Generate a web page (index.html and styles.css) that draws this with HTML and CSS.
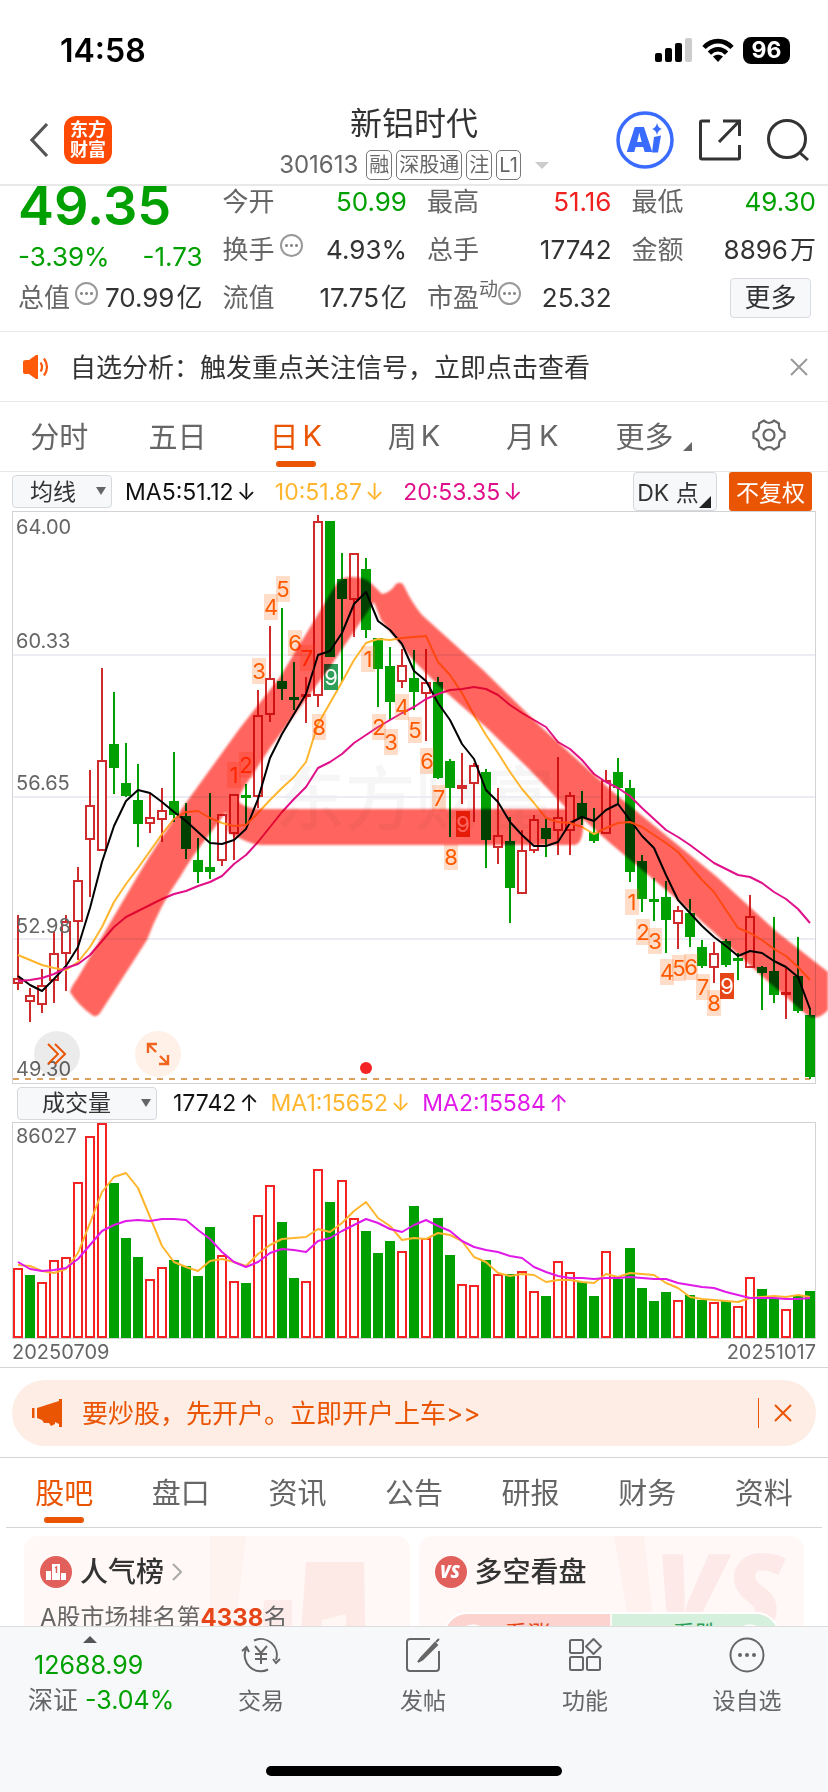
FILE: index.html
```html
<!DOCTYPE html>
<html lang="zh-CN">
  <head>
    <meta charset="UTF-8" />
    <meta name="viewport" content="width=device-width, initial-scale=1.0" />
    <title>新铝时代 301613</title>

    <link rel="stylesheet" href="styles.css">
  </head>
  <body>
    <div class="status-bar">
      <span class="status-time">14:58</span>
      <div class="status-icons">
        <svg width="38" height="24" viewBox="0 0 38 24">
          <rect x="0" y="15" width="7" height="9" rx="2" />
          <rect x="10" y="10" width="7" height="14" rx="2" />
          <rect x="20" y="5" width="7" height="19" rx="2" />
          <rect x="30" y="0" width="7" height="24" rx="2" fill="#ccc" />
        </svg>
        <svg width="32" height="24" viewBox="0 0 32 24">
          <g fill="none" stroke="#000" stroke-width="4.6">
            <path d="M2 9.5C10 1 22 1 30 9.5" />
            <path d="M7.4 15.2C12.5 10 19.5 10 24.6 15.2" />
          </g>
          <path d="M16 24L11 18.5C14 16 18 16 21 18.5Z" />
        </svg>
        <span class="battery">96</span>
      </div>
    </div>

    <header class="header">
      <div class="header-left">
        <button class="icon-btn" aria-label="返回">
          <svg width="20" height="36" viewBox="0 0 20 36"><path d="M18 2L3 18L18 34" fill="none" stroke="#555" stroke-width="3.2" /></svg>
        </button>
        <a class="logo" href="#">东方<br>财富</a>
      </div>
      <div class="header-title">
        <h1>新铝时代</h1>
        <div class="header-sub">
          <span class="code">301613</span>
          <span class="tag">融</span><span class="tag">深股通</span><span class="tag">注</span><span class="tag">L1</span>
          <i class="caret"></i>
        </div>
      </div>
      <div class="header-right">
        <button class="icon-btn" aria-label="AI">
          <svg width="58" height="58" viewBox="0 0 58 58">
            <circle cx="29" cy="29" r="27" fill="#fff" stroke="#3a6bff" stroke-width="3.5" />
            <text class="ai-text" x="10" y="41">A</text>
            <path d="M38 26l7-1.5-3 17h-6z" fill="#3a6bff" />
            <path d="M41 12Q42 17 46 18Q42 19 41 24Q40 19 36 18Q40 17 41 12Z" fill="#3a6bff" />
          </svg>
        </button>
        <button class="icon-btn" aria-label="分享">
          <svg width="44" height="44" viewBox="0 0 44 44" fill="none" stroke="#333" stroke-width="3"><path d="M12 3H4Q2.500 3 2.500 4.500V39.500Q2.500 41 4 41H40Q41.500 41 41.500 39.500V27M25 3H41.500V18M41 3.500L21 24" /></svg>
        </button>
        <button class="icon-btn" aria-label="搜索">
          <svg width="44" height="44" viewBox="0 0 44 44" fill="none" stroke="#333" stroke-width="3"><circle cx="21" cy="21" r="18.5" /><path d="M33 34L42 42" /></svg>
        </button>
      </div>
    </header>

    <main class="main">
      <section class="quote">
        <div class="quote-col">
          <div class="price down">49.35</div>
          <div class="quote-row change down"><span>-3.39%</span><span>-1.73</span></div>
          <div class="quote-row"><span class="label">总值<i class="more-dot"></i></span><span>70.99<em>亿</em></span></div>
        </div>
        <div class="quote-col">
          <div class="quote-row first"><span class="label">今开</span><span class="down">50.99</span></div>
          <div class="quote-row"><span class="label">换手<i class="more-dot"></i></span><span>4.93%</span></div>
          <div class="quote-row"><span class="label">流值</span><span>17.75<em>亿</em></span></div>
        </div>
        <div class="quote-col">
          <div class="quote-row first"><span class="label">最高</span><span class="up">51.16</span></div>
          <div class="quote-row"><span class="label">总手</span><span>17742</span></div>
          <div class="quote-row"><span class="label">市盈<sup>动</sup><i class="more-dot tight"></i></span><span>25.32</span></div>
        </div>
        <div class="quote-col">
          <div class="quote-row first"><span class="label">最低</span><span class="down">49.30</span></div>
          <div class="quote-row"><span class="label">金额</span><span>8896<em>万</em></span></div>
          <div class="quote-row last"><button class="more-btn">更多</button></div>
        </div>
      </section>

      <section class="notice">
        <svg width="28" height="24" viewBox="0 0 28 24">
          <path d="M1 7Q1 5 4 5H7L14 0H16V24H14L7 19H4Q1 19 1 17Z" fill="#ff5a0a" />
          <path d="M18.5 7.5Q21.500 12 18.500 16.500M22 3.500Q28 12 22 20.500" fill="none" stroke="#ff5a0a" stroke-width="2.2" />
        </svg>
        <p>自选分析：触发重点关注信号，立即点击查看</p>
        <button class="icon-btn" aria-label="关闭">
          <svg width="18" height="18" viewBox="0 0 18 18"><path d="M1 1L17 17M17 1L1 17" stroke="#999" stroke-width="2" /></svg>
        </button>
      </section>

      <nav class="tabs period-tabs">
        <a href="#">分时</a>
        <a href="#">五日</a>
        <a href="#" class="active">日<span>K</span></a>
        <a href="#">周<span>K</span></a>
        <a href="#">月<span>K</span></a>
        <a href="#" class="more-tab">更多<i class="corner"></i></a>
        <a href="#" aria-label="设置">
          <svg width="34" height="34" viewBox="0 0 34 34" fill="none" stroke="#666" stroke-width="2.2" stroke-linejoin="round">
            <path d="M12 2.500Q14 5 17 5Q20 5 22 2.500L27 5.500Q26.500 9 28 11.500Q29.500 13.500 32.500 14V20Q29.500 20.500 28 22.500Q26.500 25 27 28.500L22 31.500Q20 29 17 29Q14 29 12 31.500L7 28.500Q7.500 25 6 22.500Q4.500 20.500 1.500 20V14Q4.500 13.500 6 11.500Q7.500 9 7 5.500Z" />
            <circle cx="17" cy="17" r="5.5" />
          </svg>
        </a>
      </nav>

      <section class="charts">
        <div class="toolbar">
          <span class="select-box">
            <select aria-label="主图指标"><option>均线</option></select>
          </span>
          <span class="ma ma-dark">MA5:51.12<i>↓</i></span>
          <span class="ma ma-yellow">10:51.87<i>↓</i></span>
          <span class="ma ma-pink">20:53.35<i>↓</i></span>
          <button class="dk-btn">DK 点</button>
          <button class="fq-btn">不复权</button>
        </div>

        <div class="chart-wrap">
          <svg class="chart" id="kline" viewBox="12 511 804 573"></svg>
          <button class="round-btn expand" aria-label="展开">
            <svg width="20" height="22" viewBox="0 0 20 22" fill="none" stroke="#ea5504" stroke-width="2"><path d="M1 1L11 11L1 21M8 1L18 11L8 21" /></svg>
          </button>
          <button class="round-btn full" aria-label="全屏">
            <svg width="24" height="24" viewBox="0 0 24 24" fill="none" stroke="#f0641e" stroke-width="2.4"><path d="M2 11V2H11M2 2L10 10M22 13V22H13M22 22L14 14" /></svg>
          </button>
        </div>

        <div class="toolbar vol-bar">
          <span class="select-box wide">
            <select aria-label="副图指标"><option>成交量</option></select>
          </span>
          <span class="ma ma-dark">17742<i>↑</i></span>
          <span class="ma ma-yellow">MA1:15652<i>↓</i></span>
          <span class="ma ma-purple">MA2:15584<i>↑</i></span>
        </div>

        <div class="chart-wrap">
          <svg class="chart" id="volume" viewBox="12 1122 804 217"></svg>
        </div>
        <div class="dates"><span>20250709</span><span>20251017</span></div>
      </section>

      <section class="banner-wrap">
        <div class="banner">
          <svg width="32" height="28" viewBox="0 0 32 28" fill="#ea5504"><path d="M0 9H2.500V19H0ZM5 9L27 2V0H30V28H27V25L23 23V25L19 27L17 24L12 24L10 21L5 19Z" /></svg>
          <a href="#">要炒股，先开户。立即开户上车&gt;&gt;</a>
          <button class="icon-btn" aria-label="关闭广告">
            <svg width="18" height="18" viewBox="0 0 18 18"><path d="M1 1L17 17M17 1L1 17" stroke="#ea5504" stroke-width="2" /></svg>
          </button>
        </div>
      </section>

      <nav class="tabs info-tabs">
        <a href="#" class="active">股吧</a>
        <a href="#">盘口</a>
        <a href="#">资讯</a>
        <a href="#">公告</a>
        <a href="#">研报</a>
        <a href="#">财务</a>
        <a href="#">资料</a>
      </nav>

      <section class="cards">
        <article class="card">
          <svg class="card-bg" width="200" height="140" viewBox="0 0 200 140">
            <path d="M0 0H36L20 140H0Z" fill="#fff3f0" />
            <path d="M54 64H82V140H50Z" fill="#fdecea" />
            <path d="M96 26H154L156 140H88Z" fill="#fdeae7" />
            <path d="M112 84L136 78V140H120V96L110 98Z" fill="#fff7f4" />
          </svg>
          <h2>
            <svg width="32" height="32" viewBox="0 0 32 32"><circle cx="16" cy="16" r="16" fill="#e2605c" /><path d="M6 15H11V24H6ZM12 8H20V24H12ZM21 17H26V24H21Z" fill="#fff" /><path d="M15 12L16.500 11V17" fill="none" stroke="#e2605c" stroke-width="1.5" /></svg>
            人气榜
            <svg width="10" height="18" viewBox="0 0 10 18"><path d="M1 1L9 9L1 17" fill="none" stroke="#aaa" stroke-width="2" /></svg>
          </h2>
          <p>A股市场排名第<b>4338</b>名</p>
        </article>
        <article class="card">
          <svg class="card-bg" width="190" height="140" viewBox="0 0 190 140">
            <path d="M0 0H30L46 140H24Z" fill="#fef1ee" />
            <text class="vs-bg" x="40" y="98">VS</text>
          </svg>
          <h2>
            <svg width="32" height="32" viewBox="0 0 32 32"><circle cx="16" cy="16" r="16" fill="#e2605c" /><text class="vs-icon" x="15" y="22">VS</text></svg>
            多空看盘
          </h2>
          <div class="vote">
            <button class="vote-up">看涨</button>
            <button class="vote-down">看跌</button>
          </div>
        </article>
      </section>
    </main>

    <footer class="bottom-bar">
      <nav class="bottom-nav">
        <a class="index" href="#">
          <i class="caret-up"></i>
          <span class="index-value down">12688.99</span>
          <span>深证 <b class="down">-3.04%</b></span>
        </a>
        <a href="#">
          <svg width="40" height="36" viewBox="0 0 40 36" fill="none" stroke="#666" stroke-width="2">
            <path d="M13 3.500A16 16 0 0 1 35 23M27 32.500A16 16 0 0 1 5 12M1 14L5.500 10L8 15M32 22L35 26L39 22" />
            <path d="M14 9L20 16L26 9M20 16V27M14 17H26M14 22H26" />
          </svg>
          交易
        </a>
        <a href="#">
          <svg width="36" height="36" viewBox="0 0 36 36" fill="none" stroke="#666" stroke-width="2"><path d="M25 2H5Q2 2 2 5V31Q2 34 5 34H31Q34 34 34 31V14" /><path d="M30 6L16 21L13 25L17.500 22.500L32 8ZM31 5L34 2" fill="#666" /></svg>
          发帖
        </a>
        <a href="#">
          <svg width="34" height="36" viewBox="0 0 34 36" fill="none" stroke="#666" stroke-width="2"><rect x="2" y="3" width="13" height="13" rx="1.5" /><rect x="2" y="20" width="13" height="13" rx="1.5" /><rect x="19" y="20" width="13" height="13" rx="1.5" /><path d="M25.500 2L33 9.500L25.500 17L18 9.500Z" stroke-linejoin="round" /></svg>
          功能
        </a>
        <a href="#">
          <svg width="36" height="36" viewBox="0 0 36 36"><circle cx="18" cy="18" r="16.5" fill="none" stroke="#666" stroke-width="2" /><g fill="#666"><circle cx="11" cy="18" r="2" /><circle cx="18" cy="18" r="2" /><circle cx="25" cy="18" r="2" /></g></svg>
          设自选
        </a>
      </nav>
      <div class="home-indicator"></div>
    </footer>

    <script src="script.js"></script>
  </body>
</html>
```

FILE: styles.css
```css
html {
  box-sizing: border-box;
  font-family: Inter, "Noto Sans CJK SC", sans-serif;
  font-size: 24px;
}

*,
*:before,
*:after {
  box-sizing: inherit;
}

body {
  --orange: #ea5504;
  --green: #00a000;
  --red: #f02020;
  --grey: #666;
  --line: #e8e8e8;
  display: flex;
  flex-direction: column;
  height: 100vh;
  margin: 0;
  overflow: hidden;
  color: #333;
  background-color: #fff;
}

h1,
h2,
p {
  margin: 0;
  font-weight: normal;
}

a {
  color: inherit;
  text-decoration: none;
}

button,
select {
  padding: 0;
  border: none;
  color: inherit;
  font: inherit;
  background: none;
}

i,
em {
  font-style: normal;
}

svg {
  display: block;
  flex: none;
}

.up {
  color: var(--red);
}

.down {
  color: var(--green);
}

.icon-btn {
  display: flex;
}

/* ********** Status bar ********** */
.status-bar {
  display: flex;
  flex: none;
  justify-content: space-between;
  align-items: center;
  height: 100px;
  padding: 0 38px 0 60px;
}

.status-time {
  color: #000;
  font-size: 32px;
  font-weight: 600;
}

.status-icons {
  display: flex;
  align-items: center;
  gap: 9px;
}

.battery {
  width: 47px;
  border-radius: 8px;
  color: #fff;
  font-size: 23px;
  font-weight: 700;
  line-height: 27px;
  text-align: center;
  background-color: #000;
}

/* ********** Header ********** */
.header {
  display: grid;
  flex: none;
  grid-template-columns: 1fr auto 1fr;
  height: 86px;
  padding: 0 18px;
  border-bottom: 2px solid var(--line);
}

.header-left,
.header-right {
  display: flex;
  align-items: center;
  height: 80px;
}

.header-left {
  gap: 15px;
  padding-left: 11px;
}

.header-right {
  justify-content: flex-end;
  gap: 24px;
}

.logo {
  padding: 4px 6px;
  border-radius: 12px;
  color: #fff;
  font-size: 18px;
  font-weight: 700;
  line-height: 20px;
  background-color: #ff4a05;
}

.ai-text {
  fill: #3a6bff;
  font-size: 34px;
  font-weight: 900;
}

.header-title {
  text-align: center;
}

.header-title h1 {
  font-size: 32px;
  line-height: 48px;
}

.header-sub {
  display: flex;
  gap: 4px;
  align-items: center;
  padding-top: 2px;
  color: var(--grey);
}

.code {
  margin-right: 4px;
  font-size: 24px;
  line-height: 30px;
}

.tag {
  padding: 0 2px;
  border: 1px solid #777;
  border-radius: 5px;
  font-size: 20px;
  line-height: 28px;
}

.caret {
  margin-left: 10px;
  border: 7px solid transparent;
  border-top-color: #ccc;
  border-bottom: none;
}

/* ********** Quote ********** */
.main {
  flex: 1;
  min-height: 0;
  overflow-y: auto;
  scrollbar-width: none;
}

.quote {
  display: grid;
  grid-template-columns: repeat(4, 1fr);
  gap: 20px;
  padding: 0 12px 9px 18px;
  border-bottom: 1px solid var(--line);
}

.quote-row {
  display: flex;
  justify-content: space-between;
  height: 48px;
  font-size: 26px;
  line-height: 48px;
  white-space: nowrap;
}

.quote-row.first {
  height: 40px;
  line-height: 32px;
}

.quote-row.change {
  padding-top: 7px;
}

.quote-row.last {
  justify-content: flex-end;
  align-items: center;
  padding-right: 5px;
}

.price {
  font-size: 54px;
  font-weight: 600;
  line-height: 40px;
}

.label {
  display: flex;
  color: var(--grey);
}

.label sup {
  font-size: 19px;
  line-height: 32px;
}

.more-dot {
  width: 23px;
  height: 23px;
  margin: 8px 0 0 5px;
  border: 2px solid #999;
  border-radius: 50%;
  background: radial-gradient(circle, #888 1px, transparent 2px) center / 5px 5px no-repeat,
    radial-gradient(circle, #888 1px, transparent 2px) 2px center / 5px 5px no-repeat,
    radial-gradient(circle, #888 1px, transparent 2px) 12px center / 5px 5px no-repeat;
}

.more-dot.tight {
  margin-left: 0;
}

.quote-row em {
  margin-left: 2px;
}

.more-btn {
  width: 81px;
  height: 40px;
  border: 1px solid #d8dce2;
  border-radius: 4px;
  line-height: 36px;
  background-color: #f6f8fa;
}

/* ********** Notice ********** */
.notice {
  display: flex;
  align-items: center;
  height: 70px;
  padding: 0 20px 0 22px;
  border-bottom: 1px solid var(--line);
}

.notice p {
  flex: 1;
  padding: 0 0 3px 20px;
  font-size: 26px;
}

/* ********** Tabs ********** */
.tabs {
  display: grid;
  grid-template-columns: repeat(7, 1fr);
  height: 70px;
  border-bottom: 1px solid var(--line);
  color: var(--grey);
  font-size: 29px;
}

.tabs a {
  position: relative;
  display: flex;
  justify-content: center;
  align-items: center;
  padding-bottom: 3px;
}

.tabs span {
  margin-left: 4px;
}

.tabs .more-tab {
  padding-left: 6px;
}

.tabs .active {
  color: var(--orange);
}

.tabs .active:after {
  content: "";
  position: absolute;
  bottom: 4px;
  width: 40px;
  height: 6px;
  border-radius: 3px;
  background-color: var(--orange);
}

.corner {
  align-self: flex-end;
  margin: 0 0 17px 9px;
  border-bottom: 9px solid #666;
  border-left: 9px solid transparent;
}

/* ********** Charts ********** */
.charts {
  border-bottom: 1px solid #d5d5d5;
}

.toolbar {
  display: flex;
  align-items: center;
  height: 39px;
  padding: 0 16px 0 12px;
}

.vol-bar {
  height: 38px;
  padding-left: 17px;
}

.select-box {
  position: relative;
  width: 100px;
}

.select-box.wide {
  width: 140px;
}

.select-box select {
  display: block;
  width: 100%;
  height: 33px;
  padding-left: 17px;
  border: 1px solid #d5d9de;
  border-radius: 4px;
  appearance: none;
  font-size: 23px;
  background-color: #f6f8fa;
}

.select-box.wide select {
  padding-left: 24px;
}

.select-box:after {
  content: "";
  position: absolute;
  top: 12px;
  right: 6px;
  border: 5px solid transparent;
  border-top: 8px solid #666;
  border-bottom: none;
}

.ma {
  margin-left: 13px;
  font-size: 23px;
  white-space: nowrap;
}

.ma i {
  margin-left: 3px;
}

.ma + .ma {
  margin-left: 19px;
}

.vol-bar .ma {
  margin-left: 16px;
}

.vol-bar .ma + .ma {
  margin-left: 12px;
}

.ma-dark {
  color: #111;
}

.ma-yellow {
  color: #ffb62e;
}

.ma-pink {
  color: #e0108a;
}

.ma-purple {
  color: #e018e8;
}

.dk-btn {
  position: relative;
  width: 84px;
  height: 39px;
  margin-left: auto;
  padding: 0 14px 2px 0;
  border: 1px solid #d5d9de;
  border-radius: 4px;
  font-size: 23px;
  background-color: #f6f8fa;
}

.dk-btn:after {
  content: "";
  position: absolute;
  right: 5px;
  bottom: 2px;
  border-bottom: 12px solid #222;
  border-left: 12px solid transparent;
}

.fq-btn {
  width: 83px;
  height: 39px;
  margin-left: 12px;
  padding-bottom: 2px;
  border-radius: 3px;
  color: #fff;
  font-size: 23px;
  background-color: var(--orange);
}

.chart-wrap {
  position: relative;
  padding: 0 12px;
}

.chart {
  width: 100%;
  height: auto;
  overflow: visible;
}

.frame {
  fill: none;
  stroke: #d3d3d6;
}

.grid-line {
  stroke: #ececf4;
  stroke-width: 2;
}

.last-line {
  stroke: #dba05e;
  stroke-width: 2;
  stroke-dasharray: 6 6;
}

.axis-label {
  fill: #666;
  font-size: 20px;
}

.watermark {
  fill: #f6f6f6;
  font-size: 70px;
  font-weight: 500;
}

.candle-up {
  fill: #fff;
  stroke: #cf2a2c;
  stroke-width: 2;
}

.candle-down {
  fill: var(--green);
  stroke: var(--green);
  stroke-width: 2;
}

.vol-up {
  fill: #fff;
  stroke: #f52424;
  stroke-width: 2;
}

.line {
  fill: none;
  stroke-width: 2;
  stroke-linejoin: round;
}

.line-dark {
  stroke: #000;
}

.line-yellow {
  stroke: #ffb62e;
}

.line-pink {
  stroke: #e0108a;
}

.line-purple {
  stroke: #e018e8;
}

.mark-bg {
  fill: #ff7a30;
  fill-opacity: 0.26;
}

.mark-text {
  fill: #ff5a00;
  font-size: 22px;
  text-anchor: middle;
}

.mark-bg.sell {
  fill: #2f9e58;
  fill-opacity: 1;
}

.mark-bg.buy {
  fill: #e64518;
  fill-opacity: 1;
}

.sell + .mark-text,
.buy + .mark-text {
  fill: #fff;
}

/* trazos del rotulador encima de las velas */
.marker {
  fill: #ff655e;
  filter: blur(1px);
  mix-blend-mode: multiply;
}

.round-btn {
  position: absolute;
  bottom: 7px;
  display: flex;
  justify-content: center;
  align-items: center;
  width: 46px;
  height: 46px;
  border-radius: 50%;
}

.expand {
  left: 34px;
  background-color: rgba(0, 0, 0, 0.08);
}

.full {
  left: 135px;
  background-color: #fff0e8;
}

.dates {
  display: flex;
  justify-content: space-between;
  height: 28px;
  padding: 0 12px;
  color: var(--grey);
  font-size: 20px;
  line-height: 26px;
}

/* ********** Banner ********** */
.banner-wrap {
  padding: 12px 12px 11px;
  border-bottom: 1px solid #d5d5d5;
}

.banner {
  display: flex;
  align-items: center;
  height: 66px;
  padding: 0 24px 0 20px;
  border-radius: 33px;
  color: var(--orange);
  background-color: #feede5;
}

.banner a {
  flex: 1;
  padding: 0 0 3px 18px;
  font-size: 26px;
}

.banner .icon-btn {
  align-items: center;
  height: 30px;
  padding-left: 15px;
  border-left: 1px solid var(--orange);
}

.info-tabs {
  margin: 0 6px;
  border-color: #d5d5d5;
}

/* ********** Cards ********** */
.cards {
  display: grid;
  grid-template-columns: 1fr 1fr;
  gap: 9px;
  padding: 8px 24px;
}

.card {
  position: relative;
  height: 150px;
  padding: 12px 16px;
  border-radius: 14px;
  overflow: hidden;
  background-color: #fff8f6;
}

.card-bg {
  position: absolute;
  top: 0;
  right: 0;
}

.card h2 {
  position: relative;
  display: flex;
  align-items: center;
  gap: 8px;
  font-size: 28px;
  font-weight: 500;
  line-height: 48px;
}

.card p {
  position: relative;
  color: var(--grey);
  font-size: 24px;
  line-height: 44px;
}

.card b {
  color: #e64518;
}

.vs-bg {
  fill: #fdeae8;
  font-family: "Open Sans", sans-serif;
  font-size: 112px;
  font-style: italic;
  font-weight: 800;
}

.vs-icon {
  fill: #fff;
  font-family: "Open Sans", sans-serif;
  font-size: 17px;
  font-style: italic;
  font-weight: 800;
  text-anchor: middle;
}

.vote {
  position: relative;
  display: grid;
  grid-template-columns: 1fr 1fr;
  gap: 2px;
  margin: 16px 8px;
  border: 2px solid #fff;
  border-radius: 24px;
  overflow: hidden;
}

.vote button {
  height: 44px;
  padding-bottom: 8px;
  font-size: 23px;
}

.vote-up {
  color: #e64518;
  background: radial-gradient(circle at 28px 28px, #fff 17px, transparent 18px) #fdd3cf;
}

.vote-down {
  color: #2f9e58;
  background: radial-gradient(circle at 138px 28px, #fff 17px, transparent 18px) #d5f0dc;
}

/* ********** Bottom bar ********** */
.bottom-bar {
  flex: none;
  height: 166px;
  border-top: 1px solid #ddd;
  background-color: #f6f8fa;
}

.bottom-nav {
  display: grid;
  grid-template-columns: 180px repeat(4, 1fr);
  height: 139px;
  color: var(--grey);
  font-size: 23px;
}

.bottom-nav a {
  display: flex;
  flex-direction: column;
  align-items: center;
  gap: 9px;
  padding-top: 10px;
}

.bottom-nav .index {
  align-items: flex-start;
  gap: 0;
  padding: 9px 0 0 28px;
  font-size: 25px;
  line-height: 35px;
  white-space: nowrap;
}

.index-value {
  padding-left: 6px;
}

.index b {
  font-weight: normal;
}

.caret-up {
  margin-left: 55px;
  margin-bottom: 5px;
  border: 7px solid transparent;
  border-top: none;
  border-bottom: 7px solid #555;
}

.home-indicator {
  width: 296px;
  height: 10px;
  margin: 0 auto;
  border-radius: 5px;
  background-color: #000;
}
```

FILE: script.js
```js
const d = document;

const START_X = 18,
  STEP = 12;

// [tipo, maximo, techo, base, minimo]
const candles = [
  ["u", 915, 978, 984, 990], ["u", 988, 995, 1002, 1022], ["u", 969, 985, 1005, 1013],
  ["u", 932, 953, 981, 1003], ["u", 915, 921, 954, 991], ["u", 867, 880, 922, 960],
  ["u", 770, 805, 840, 897], ["u", 668, 760, 851, 851], ["d", 692, 744, 768, 794],
  ["d", 743, 783, 796, 797], ["d", 764, 800, 824, 847], ["u", 793, 817, 824, 833],
  ["u", 788, 810, 820, 842], ["d", 752, 801, 815, 822], ["d", 803, 816, 849, 859],
  ["d", 838, 860, 872, 883], ["d", 793, 867, 872, 879], ["u", 814, 814, 861, 866],
  ["u", 794, 794, 834, 860], ["d", 784, 795, 797, 824], ["u", 690, 715, 797, 808],
  ["u", 626, 678, 715, 722], ["d", 608, 681, 689, 700], ["d", 662, 697, 699, 710],
  ["u", 677, 694, 696, 723], ["u", 515, 521, 696, 707], ["d", 521, 521, 657, 657],
  ["d", 553, 579, 599, 682], ["u", 553, 553, 600, 637], ["d", 558, 569, 630, 638],
  ["d", 638, 638, 669, 707], ["d", 647, 666, 702, 720], ["u", 649, 665, 682, 688],
  ["d", 650, 678, 692, 710], ["u", 649, 682, 694, 741], ["d", 677, 682, 778, 779],
  ["d", 759, 761, 788, 837], ["u", 753, 785, 789, 804], ["u", 763, 765, 784, 822],
  ["d", 769, 772, 840, 868], ["u", 788, 835, 848, 864], ["d", 817, 841, 888, 923],
  ["u", 830, 850, 894, 894], ["u", 815, 819, 851, 853], ["d", 819, 828, 839, 857],
  ["u", 757, 817, 831, 855], ["u", 792, 795, 831, 855], ["d", 791, 803, 818, 825],
  ["d", 808, 832, 841, 843], ["u", 770, 780, 834, 834], ["d", 758, 772, 788, 805],
  ["d", 780, 788, 872, 882], ["d", 855, 861, 899, 912], ["d", 878, 899, 901, 921],
  ["d", 881, 897, 920, 953], ["u", 906, 910, 924, 949], ["d", 899, 913, 937, 947],
  ["d", 940, 947, 966, 968], ["u", 942, 953, 968, 983], ["d", 939, 941, 965, 967],
  ["d", 953, 958, 960, 980], ["u", 895, 916, 968, 968], ["d", 966, 967, 973, 1010],
  ["d", 917, 971, 995, 1003], ["u", 968, 992, 995, 1019], ["d", 937, 976, 1011, 1013],
  ["d", 1008, 1015, 1077, 1079],
];

const ma5 = [976, 985, 991, 979, 966, 947, 908, 862, 826, 801, 790, 793, 802, 812, 821, 832, 843, 844, 840, 829, 799, 758, 734, 714, 694, 655, 651, 633, 604, 592, 621, 630, 644, 671, 681, 703, 720, 744, 759, 790, 802, 822, 835, 846, 846, 842, 823, 817, 821, 810, 804, 820, 836, 848, 875, 900, 913, 926, 937, 946, 956, 951, 953, 961, 967, 977, 1009];
const ma10 = [955, 960, 965, 968, 970, 962, 947, 927, 902, 884, 868, 851, 834, 819, 812, 811, 818, 823, 826, 825, 813, 800, 788, 777, 762, 724, 703, 682, 660, 643, 639, 640, 638, 637, 636, 662, 675, 693, 715, 735, 753, 772, 789, 803, 818, 822, 823, 827, 834, 828, 823, 822, 827, 835, 843, 852, 866, 880, 892, 910, 928, 933, 940, 949, 956, 967, 980];
const ma20 = [981, 980, 978, 974, 968, 964, 955, 941, 927, 917, 911, 905, 899, 894, 891, 886, 882, 876, 864, 855, 842, 827, 812, 799, 787, 768, 762, 754, 743, 735, 727, 720, 713, 707, 699, 694, 690, 689, 687, 689, 695, 705, 713, 720, 727, 742, 749, 760, 774, 782, 788, 796, 808, 819, 830, 837, 845, 854, 863, 869, 875, 877, 883, 892, 899, 909, 923];

const volumes = [1269, 1276, 1283, 1261, 1258, 1183, 1137, 1124, 1184, 1239, 1258, 1280, 1268, 1261, 1267, 1277, 1228, 1256, 1282, 1284, 1216, 1186, 1223, 1279, 1282, 1170, 1203, 1181, 1219, 1232, 1254, 1242, 1252, 1207, 1239, 1219, 1256, 1285, 1286, 1261, 1275, 1275, 1272, 1292, 1297, 1262, 1273, 1283, 1297, 1252, 1280, 1249, 1289, 1302, 1293, 1301, 1296, 1301, 1303, 1302, 1307, 1278, 1290, 1299, 1310, 1297, 1292];
// una letra por barra, en grupos de diez
const volTypes = [
  "uduuuuuudd",
  "duudddduud",
  "uudduuduud",
  "ddududduud",
  "uduuduuddu",
  "ddddduddud",
  "uuddudd",
].join("");
const volMa1 = [1265, 1266, 1271, 1273, 1269, 1253, 1223, 1192, 1177, 1173, 1188, 1217, 1246, 1262, 1267, 1271, 1261, 1259, 1262, 1266, 1254, 1245, 1239, 1238, 1237, 1229, 1232, 1223, 1211, 1202, 1218, 1226, 1240, 1238, 1239, 1233, 1235, 1241, 1257, 1262, 1273, 1276, 1274, 1275, 1282, 1280, 1280, 1282, 1283, 1274, 1277, 1273, 1274, 1275, 1283, 1288, 1297, 1299, 1300, 1301, 1302, 1298, 1297, 1296, 1297, 1295, 1297];
const volMa2 = [1262, 1269, 1271, 1270, 1268, 1259, 1245, 1231, 1225, 1221, 1220, 1221, 1219, 1219, 1220, 1230, 1239, 1252, 1262, 1267, 1262, 1253, 1249, 1250, 1252, 1241, 1238, 1231, 1225, 1219, 1223, 1229, 1232, 1225, 1220, 1226, 1231, 1241, 1247, 1250, 1252, 1256, 1258, 1267, 1272, 1276, 1278, 1278, 1279, 1278, 1278, 1277, 1278, 1279, 1279, 1283, 1285, 1287, 1288, 1292, 1295, 1298, 1298, 1298, 1299, 1299, 1298];

// [numero, x, y, clase]
const marks = [
  [1, 234, 775], [2, 246, 765], [3, 259, 671], [4, 271, 607], [5, 283, 589], [6, 295, 643],
  [7, 307, 658], [8, 319, 727], [9, 331, 677, "sell"],
  [1, 368, 659], [2, 379, 727], [3, 391, 742], [4, 402, 707], [5, 415, 730], [6, 427, 761],
  [7, 439, 798], [8, 451, 857], [9, 463, 824, "buy"],
  [1, 632, 902], [2, 643, 932], [3, 655, 941], [4, 667, 972], [5, 679, 968], [6, 691, 967],
  [7, 703, 987], [8, 714, 1003], [9, 727, 986, "buy"],
];

const labels = [["64.00", 534], ["60.33", 648], ["56.65", 790], ["52.98", 933], ["49.30", 1076]];

function line(values, name) {
  const points = values.map((y, i) => `${START_X + STEP * i},${y}`).join(" ");
  return `<polyline class="line ${name}" points="${points}" />`;
}

function drawKline() {
  let html = `<text class="watermark" x="275" y="825">东方财富</text>`;

  [655, 797, 939].forEach((y) => {
    html += `<line class="grid-line" x1="13" x2="815" y1="${y}" y2="${y}" />`;
  });

  html += `<rect class="frame" x="12.5" y="511.5" width="803" height="572" />`;
  html += `<line class="last-line" x1="13" x2="810" y1="1079" y2="1079" />`;

  candles.forEach(([type, high, top, bottom, low], i) => {
    const x = START_X + STEP * i;
    html += `<g class="${type === "u" ? "candle-up" : "candle-down"}">
      <path d="M${x} ${high}V${top}M${x} ${bottom}V${low}" />
      <rect x="${x - 4}" y="${top + 1}" width="8" height="${Math.max(bottom - top - 2, 1)}" />
    </g>`;
  });

  html += line(ma5, "line-dark") + line(ma10, "line-yellow") + line(ma20, "line-pink");

  marks.forEach(([n, x, y, name = ""]) => {
    html += `<rect class="mark-bg ${name}" x="${x - 7}" y="${y - 13}" width="14" height="26" />
      <text class="mark-text" x="${x}" y="${y + 8}">${n}</text>`;
  });

  labels.forEach(([text, y]) => {
    html += `<text class="axis-label" x="16" y="${y}">${text}</text>`;
  });

  html += `<circle cx="366" cy="1068" r="6" fill="#f52424" />`;

  html += `<g class="marker">
    <path d="M70 992Q71 987 77 979L100 940L137 877Q160 838 188 800L240 728L280 677L335 586Q340 577 350 577Q364 576 372 584L382 594Q390 593 396 584Q402 580 405 588Q412 603 422 615L483 670L540 726L613 792L717 877L777 932L828 972V1010Q817 1022 807 1015L763 977L678 900L610 843L583 819Q584 843 575 845H262Q250 845 228 832L226 812L212 831Q192 856 180 877Q160 905 147 940L102 1010Q97 1019 92 1015Q78 1005 70 992ZM245 786Q236 800 240 803Q247 809 262 809H567L530 770L487 728L440 687L413 660L381 620L374 602L330 667L270 748Z" />
  </g>`;

  d.getElementById("kline").innerHTML = html;
}

function drawVolume() {
  let html = `<rect class="frame" x="12.5" y="1122.5" width="803" height="216" />`;

  volumes.forEach((top, i) => {
    html += `<rect class="${volTypes[i] === "u" ? "vol-up" : "candle-down"}" x="${START_X + STEP * i - 4}" y="${top}" width="8" height="${1337 - top}" />`;
  });

  html += line(volMa1, "line-yellow") + line(volMa2, "line-purple");
  html += `<text class="axis-label" x="16" y="1143">86027</text>`;

  d.getElementById("volume").innerHTML = html;
}

d.addEventListener("DOMContentLoaded", () => {
  drawKline();
  drawVolume();
});
```
